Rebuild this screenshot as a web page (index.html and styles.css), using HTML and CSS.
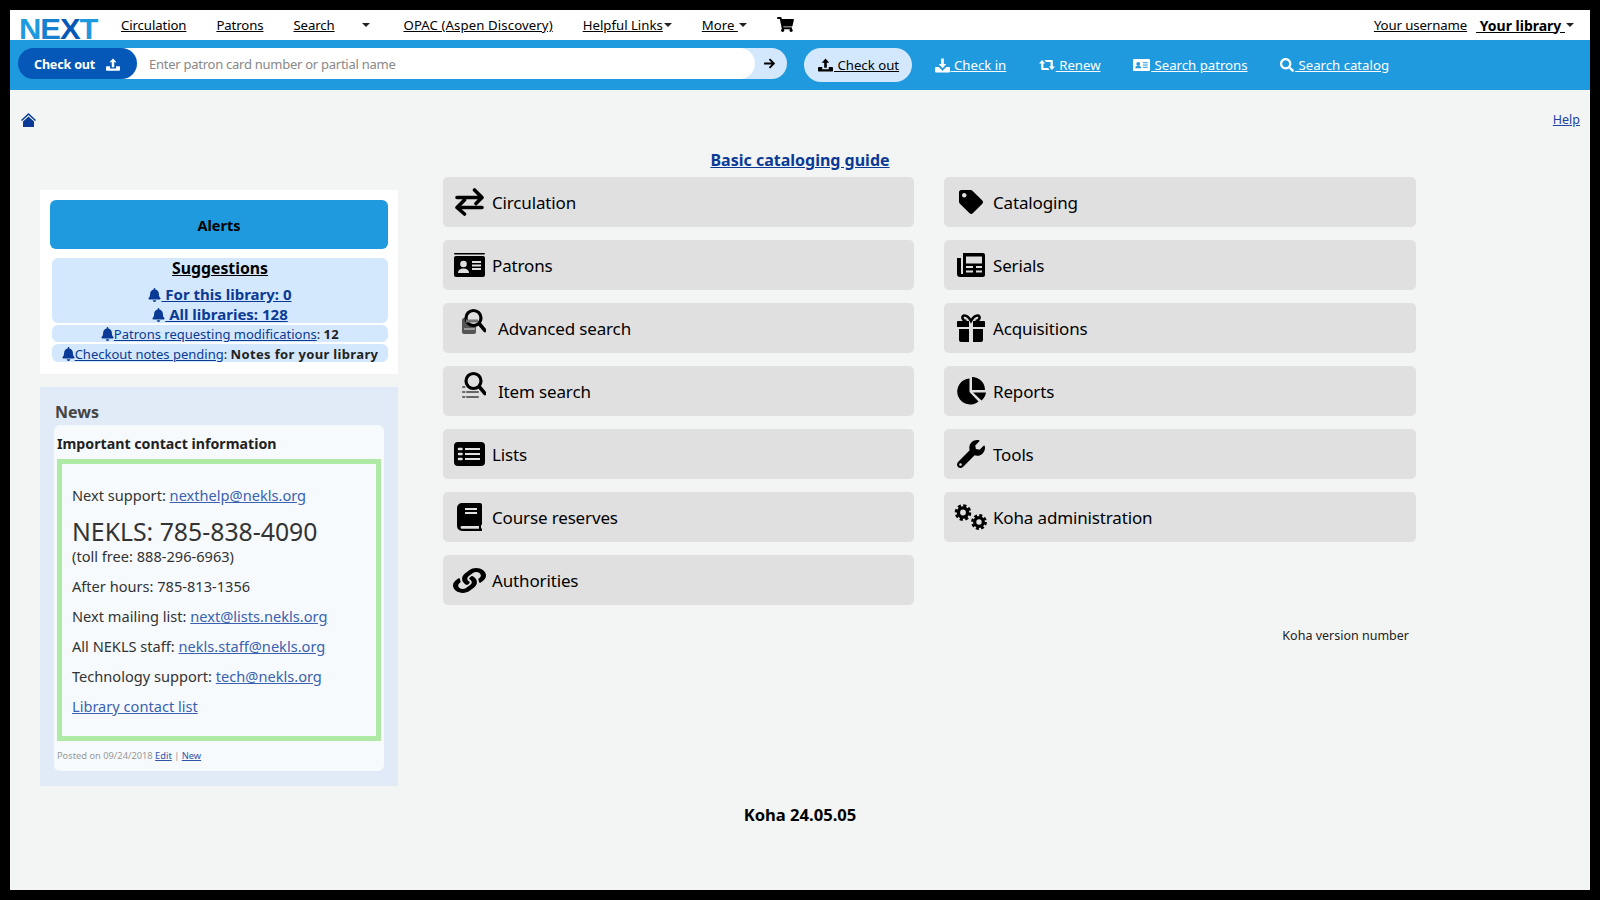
FILE: index.html
```html
<!DOCTYPE html>
<html lang="en">
<head>
    <meta charset="UTF-8">
    <meta name="viewport" content="width=device-width, initial-scale=1.0">
    <title>Koha staff interface</title>
    <link rel="stylesheet" href="styles.css">
</head>
<body>
    <svg class="sprite" xmlns="http://www.w3.org/2000/svg">
        <symbol id="i-cart" viewBox="0 0 576 512"><path d="M528.12 301.319l47.273-208C578.806 78.301 567.391 64 551.99 64H159.208l-9.166-44.81C147.758 8.021 137.93 0 126.529 0H24C10.745 0 0 10.745 0 24v16c0 13.255 10.745 24 24 24h69.883l70.248 343.435C147.325 417.1 136 435.222 136 456c0 30.928 25.072 56 56 56s56-25.072 56-56c0-15.674-6.447-29.835-16.824-40h209.647C430.447 426.165 424 440.326 424 456c0 30.928 25.072 56 56 56s56-25.072 56-56c0-22.172-12.888-41.332-31.579-50.405l5.517-24.276c3.413-15.018-8.002-29.319-23.403-29.319H218.117l-6.545-32h293.145c11.206 0 20.92-7.754 23.403-18.681z"/></symbol>
        <symbol id="i-bell" viewBox="0 0 448 512"><path d="M224 512c35.32 0 63.97-28.65 63.97-64H160.03c0 35.35 28.65 64 63.97 64zm215.39-149.71c-19.32-20.76-55.47-51.99-55.47-154.29 0-77.7-54.48-139.9-127.94-155.16V32c0-17.67-14.32-32-31.98-32s-31.98 14.33-31.98 32v20.84C118.56 68.1 64.08 130.3 64.08 208c0 102.3-36.15 133.53-55.47 154.29-6 6.45-8.66 14.16-8.61 21.71.11 16.4 12.98 32 32.1 32h383.8c19.12 0 32-15.6 32.1-32 .05-7.55-2.61-15.27-8.61-21.71z"/></symbol>
        <symbol id="i-search" viewBox="0 0 512 512"><path d="M505 442.7L405.3 343c-4.5-4.5-10.6-7-17-7H372c27.6-35.3 44-79.7 44-128C416 93.1 322.9 0 208 0S0 93.1 0 208s93.1 208 208 208c48.3 0 92.7-16.4 128-44v16.3c0 6.4 2.5 12.5 7 17l99.7 99.7c9.4 9.4 24.6 9.4 33.9 0l28.3-28.3c9.4-9.4 9.4-24.6.1-34zM208 336c-70.7 0-128-57.2-128-128 0-70.7 57.2-128 128-128 70.7 0 128 57.2 128 128 0 70.7-57.2 128-128 128z"/></symbol>
        <symbol id="i-wrench" viewBox="0 0 512 512"><path d="M507.73 109.1c-2.24-9.03-13.54-12.09-20.12-5.51l-74.36 74.36-67.88-11.31-11.31-67.88 74.36-74.36c6.62-6.62 3.43-17.9-5.66-20.16-47.38-11.74-99.55.91-136.58 37.93-39.64 39.64-50.55 97.1-34.05 147.2L18.74 402.76c-24.99 24.99-24.99 65.51 0 90.5 24.99 24.99 65.51 24.99 90.5 0l213.21-213.21c50.12 16.71 107.47 5.68 147.37-34.22 37.07-37.07 49.7-89.32 37.91-136.73zM64 472c-13.25 0-24-10.75-24-24 0-13.26 10.75-24 24-24s24 10.74 24 24c0 13.25-10.75 24-24 24z"/></symbol>
        <symbol id="i-tag" viewBox="0 0 512 512"><path d="M0 252.118V48C0 21.49 21.49 0 48 0h204.118a48 48 0 0 1 33.941 14.059l211.882 211.882c18.745 18.745 18.745 49.137 0 67.882L293.823 497.941c-18.745 18.745-49.137 18.745-67.882 0L14.059 286.059A48 48 0 0 1 0 252.118zM112 64c-26.51 0-48 21.49-48 48s21.49 48 48 48 48-21.49 48-48-21.49-48-48-48z"/></symbol>
        <symbol id="i-home" viewBox="0 0 15 14"><path d="M7.5 0L15 7l-1 1-6.5-6L1 8 0 7z"/><path d="M7.5 3.5L13 8.5V14H2V8.5z"/></symbol>
        <symbol id="i-upload" viewBox="0 0 16 14"><path d="M8 0l4 4.5H9.4V10H6.6V4.5H4z"/><path d="M1 9h3.5v2.5h7V9H15a1 1 0 0 1 1 1v3a1 1 0 0 1-1 1H1a1 1 0 0 1-1-1v-3a1 1 0 0 1 1-1z"/></symbol>
        <symbol id="i-download" viewBox="0 0 16 15"><path d="M6.6 0h2.8v6H12l-4 4.5L4 6h2.6z"/><path d="M1 9h3l4 4 4-4h3a1 1 0 0 1 1 1v4a1 1 0 0 1-1 1H1a1 1 0 0 1-1-1v-4a1 1 0 0 1 1-1z"/></symbol>
        <symbol id="i-renew" viewBox="0 0 16 12"><path d="M3 1L6.2 4.6H4.4V9H9l1.7 2H3.2a1 1 0 0 1-1-1V4.6H0z"/><path d="M13 11L9.8 7.4h1.8V3H7L5.3 1h7.5a1 1 0 0 1 1 1v5.400H16z"/></symbol>
        <symbol id="i-card" viewBox="0 0 31 24"><rect width="31" height="1.600" rx=".8"/><rect y="3" width="31" height="21" rx="2"/><circle cx="9.500" cy="11" r="3.300" fill="#e0e0e0"/><path d="M4 20c0-3 2-4.500 5.500-4.500S15 17 15 20z" fill="#e0e0e0"/><path d="M18 9h9M18 12.500h9M18 16h9" stroke="#e0e0e0" stroke-width="1.800"/></symbol>
        <symbol id="i-card-white" viewBox="0 0 31 24"><rect width="31" height="22" y="1" rx="2"/><circle cx="9.500" cy="10" r="3.500" fill="#209ade"/><path d="M4 18c0-3 2-4.500 5.500-4.500S15 15 15 18z" fill="#209ade"/><path d="M18 8h9M18 12h9M18 16h9" stroke="#209ade" stroke-width="2"/></symbol>
        <symbol id="i-exchange" viewBox="0 0 29 27"><path d="M2 9h25M19.500 1.500L27 9l-6 6M27 19H2M9.500 11.500L2 19l7.500 6.500" fill="none" stroke="#000" stroke-width="3.600" stroke-linecap="round" stroke-linejoin="round"/></symbol>
        <symbol id="i-adv" viewBox="0 0 24 26"><rect y="9" width="14" height="16" rx="2" fill="#555"/><circle cx="11.500" cy="9" r="7.500" fill="#e0e0e0" stroke="#000" stroke-width="3.200"/><path d="M4 12h12" stroke="#777" stroke-width="3"/><path d="M2 20h11" stroke="#9a9a9a" stroke-width="2"/><path d="M17.500 15l5.500 6.500" stroke="#000" stroke-width="3.600" stroke-linecap="round"/></symbol>
        <symbol id="i-item" viewBox="0 0 24 26"><path d="M1 15h1.500M1 20h1.500M1 25h1.500M5 20h11M5 25h11" stroke="#666" stroke-width="2" stroke-linecap="round"/><circle cx="11.500" cy="9" r="7.500" fill="#e0e0e0" stroke="#000" stroke-width="3.200"/><path d="M17.500 15l5.500 6.500" stroke="#000" stroke-width="3.600" stroke-linecap="round"/></symbol>
        <symbol id="i-list" viewBox="0 0 31 24"><rect width="31" height="24" rx="4"/><path d="M5 7h2.500M5 12h2.500M5 17h2.500" stroke="#e0e0e0" stroke-width="2.600" stroke-linecap="round"/><path d="M11 7h15M11 12h15M11 17h15" stroke="#e0e0e0" stroke-width="2"/></symbol>
        <symbol id="i-book" viewBox="0 0 25 28"><path d="M5 0h18a2 2 0 0 1 2 2v19a1.500 1.500 0 0 1-1 1.400v3.200h1V28H5a5 5 0 0 1-5-5V5a5 5 0 0 1 5-5z"/><path d="M8 6h12M8 10h12" stroke="#e0e0e0" stroke-width="1.800"/><path d="M5 23h17v2.800H5a1.400 1.400 0 0 1 0-2.800z" fill="#e0e0e0"/></symbol>
        <symbol id="i-serials" viewBox="0 0 28 24"><path d="M6 0h20a2 2 0 0 1 2 2v20a2 2 0 0 1-2 2H3a3 3 0 0 1-3-3V5h4v16h2z"/><rect x="9" y="3.500" width="16" height="7" fill="#e0e0e0"/><path d="M9 14h7M19 14h6M9 18.500h7M19 18.500h6" stroke="#e0e0e0" stroke-width="2"/></symbol>
        <symbol id="i-gift" viewBox="0 0 28 28"><path d="M9.500 7C5 7 4 1.500 7.500 1.500 11 1.500 14 7 14 7s3-5.500 6.500-5.500C24 1.500 23 7 18.500 7" fill="none" stroke="#000" stroke-width="2.600"/><path d="M1 7h11v6H0V8a1 1 0 0 1 1-1zM16 7h11a1 1 0 0 1 1 1v5H16zM2 15h10v13H4a2 2 0 0 1-2-2zM16 15h10v11a2 2 0 0 1-2 2h-8z"/></symbol>
        <symbol id="i-pie" viewBox="0 0 30 28"><path d="M13.500 1.500V15l9 9.500A13 13 0 1 1 13.500 1.500z"/><path d="M16 0a13 13 0 0 1 13 13H16z"/><path d="M17 15.500h13a13 13 0 0 1-4.500 8z"/></symbol>
        <symbol id="i-link" viewBox="0 0 512 512" preserveAspectRatio="none"><path d="M326.612 185.391c59.747 59.809 58.927 155.698.36 214.59-.11.12-.24.25-.36.37l-67.2 67.2c-59.27 59.27-155.699 59.262-214.96 0-59.27-59.26-59.27-155.7 0-214.96l37.106-37.106c9.84-9.84 26.786-3.3 27.294 10.606.648 17.722 3.826 35.527 9.69 52.721 1.986 5.822.567 12.262-3.783 16.612l-13.087 13.087c-28.026 28.026-28.905 73.66-1.155 101.96 28.024 28.579 74.086 28.749 102.325.51l67.2-67.19c28.191-28.191 28.073-73.757 0-101.83-3.701-3.694-7.429-6.564-10.341-8.569a16.037 16.037 0 0 1-6.947-12.606c-.396-10.567 3.348-21.456 11.698-29.806l21.054-21.055c5.521-5.521 14.182-6.199 20.584-1.731a152.482 152.482 0 0 1 20.522 17.197zM467.547 44.449c-59.261-59.262-155.69-59.27-214.96 0l-67.2 67.2c-.12.12-.25.25-.36.37-58.566 58.892-59.387 154.781.36 214.59a152.454 152.454 0 0 0 20.521 17.196c6.402 4.468 15.064 3.789 20.584-1.731l21.054-21.055c8.35-8.35 12.094-19.239 11.698-29.806a16.037 16.037 0 0 0-6.947-12.606c-2.912-2.005-6.64-4.875-10.341-8.569-28.073-28.073-28.191-73.639 0-101.83l67.2-67.19c28.239-28.239 74.3-28.069 102.325.51 27.75 28.3 26.872 73.934-1.155 101.96l-13.087 13.087c-4.35 4.35-5.769 10.79-3.783 16.612 5.864 17.194 9.042 34.999 9.69 52.721.509 13.906 17.454 20.446 27.294 10.606l37.106-37.106c59.271-59.259 59.271-155.699.001-214.959z"/></symbol>
        <symbol id="i-cogs" viewBox="0 0 34 27"><g fill="none" stroke="#000"><circle cx="9" cy="9" r="4.600" stroke-width="3.400"/><circle cx="9" cy="9" r="7" stroke-width="2.600" stroke-dasharray="3.200 2.300"/><circle cx="25" cy="18.500" r="4.300" stroke-width="3.200"/><circle cx="25" cy="18.500" r="6.600" stroke-width="2.600" stroke-dasharray="3 2.200"/></g></symbol>
    </svg>

    <div class="app">
        <nav class="topbar">
            <a class="logo" href="#"><span class="lt">N</span><span class="md">E</span><span class="dk">X</span><span class="lt">T</span></a>
            <a class="tight" href="#">Circulation</a>
            <a class="tight" href="#">Patrons</a>
            <span class="menu menu-search"><a class="tight" href="#">Search</a><i class="caret"></i></span>
            <a class="wide" href="#">OPAC (Aspen Discovery)</a>
            <span class="menu"><a href="#">Helpful Links</a><i class="caret"></i></span>
            <span class="menu"><a href="#">More&nbsp;</a><i class="caret"></i></span>
            <a class="cart" href="#"><svg><use href="#i-cart"/></svg></a>
            <span class="topbar-right">
                <a class="username" href="#">Your username</a>
                <span class="menu"><a class="library" href="#">&nbsp;Your library&nbsp;</a><i class="caret"></i></span>
            </span>
        </nav>

        <div class="searchbar">
            <form class="checkout-form">
                <span class="checkout-label">Check out <svg><use href="#i-upload"/></svg></span>
                <input class="checkout-input" type="text" placeholder="Enter patron card number or partial name">
                <button class="checkout-go" type="button"><svg viewBox="0 0 12 12"><path d="M1 6h9M6 2l4 4-4 4" fill="none" stroke="#000" stroke-width="1.700"/></svg></button>
            </form>
            <ul class="tabs">
                <li class="tab active"><svg class="t-up"><use href="#i-upload"/></svg><a href="#"> Check out</a></li>
                <li class="tab"><svg class="t-down"><use href="#i-download"/></svg><a href="#"> Check in</a></li>
                <li class="tab"><svg class="t-renew"><use href="#i-renew"/></svg><a href="#"> Renew</a></li>
                <li class="tab"><svg class="t-card"><use href="#i-card-white"/></svg><a href="#"> Search patrons</a></li>
                <li class="tab"><svg class="t-search"><use href="#i-search"/></svg><a href="#"> Search catalog</a></li>
            </ul>
        </div>

        <main class="main">
            <div class="crumbs">
                <a class="home" href="#"><svg><use href="#i-home"/></svg></a>
                <a class="help" href="#">Help</a>
            </div>
            <h3 class="guide"><a href="#">Basic cataloging guide</a></h3>

            <div class="columns">
                <aside class="sidebar">
                    <section class="alerts">
                        <div class="alerts-head">Alerts</div>
                        <div class="alert alert-big">
                            <a class="sugg" href="#">Suggestions</a>
                            <a class="sugg-link" href="#"><svg class="bell"><use href="#i-bell"/></svg> For this library: 0</a>
                            <a class="sugg-link" href="#"><svg class="bell"><use href="#i-bell"/></svg> All libraries: 128</a>
                        </div>
                        <div class="alert alert-mods"><svg class="bell"><use href="#i-bell"/></svg><a href="#">Patrons requesting modifications</a>: <b>12</b></div>
                        <div class="alert alert-notes"><svg class="bell"><use href="#i-bell"/></svg><a href="#">Checkout notes pending</a>: <b>Notes for your library</b></div>
                    </section>
                    <section class="news">
                        <h3>News</h3>
                        <div class="news-card">
                            <h4>Important contact information</h4>
                            <div class="news-body">
                                <p>Next support: <a href="#">nexthelp@nekls.org</a></p>
                                <p class="phone"><span>NEKLS: 785-838-4090</span><br>(toll free: 888-296-6963)</p>
                                <p>After hours: 785-813-1356</p>
                                <p>Next mailing list: <a href="#">next@lists.nekls.org</a></p>
                                <p>All NEKLS staff: <a href="#">nekls.staff@nekls.org</a></p>
                                <p>Technology support: <a href="#">tech@nekls.org</a></p>
                                <p><a href="#">Library contact list</a></p>
                            </div>
                            <div class="news-foot">Posted on 09/24/2018 <a href="#">Edit</a> | <a href="#">New</a></div>
                        </div>
                    </section>
                </aside>

                <div class="modules">
                    <div class="module-grid">
                        <a class="module" href="#"><span class="slot"><svg class="w29"><use href="#i-exchange"/></svg></span>Circulation</a>
                        <a class="module" href="#"><span class="slot"><svg class="w24"><use href="#i-tag"/></svg></span>Cataloging</a>
                        <a class="module" href="#"><span class="slot"><svg class="w31"><use href="#i-card"/></svg></span>Patrons</a>
                        <a class="module" href="#"><span class="slot"><svg class="w28"><use href="#i-serials"/></svg></span>Serials</a>
                        <a class="module shifted" href="#"><span class="slot"><svg class="w24"><use href="#i-adv"/></svg></span>Advanced search</a>
                        <a class="module" href="#"><span class="slot"><svg class="w28"><use href="#i-gift"/></svg></span>Acquisitions</a>
                        <a class="module shifted" href="#"><span class="slot"><svg class="w24"><use href="#i-item"/></svg></span>Item search</a>
                        <a class="module" href="#"><span class="slot"><svg class="w30"><use href="#i-pie"/></svg></span>Reports</a>
                        <a class="module" href="#"><span class="slot"><svg class="w31"><use href="#i-list"/></svg></span>Lists</a>
                        <a class="module" href="#"><span class="slot"><svg class="w28"><use href="#i-wrench"/></svg></span>Tools</a>
                        <a class="module" href="#"><span class="slot"><svg class="w25"><use href="#i-book"/></svg></span>Course reserves</a>
                        <a class="module" href="#"><span class="slot"><svg class="w34"><use href="#i-cogs"/></svg></span>Koha administration</a>
                        <a class="module" href="#"><span class="slot"><svg class="w33"><use href="#i-link"/></svg></span>Authorities</a>
                    </div>
                    <div class="version-note">Koha version number</div>
                </div>
            </div>

            <div class="koha-version">Koha 24.05.05</div>
        </main>
    </div>
</body>
</html>
```

FILE: styles.css
```css
* {
    box-sizing: border-box;
}
html, body {
    height: 100%;
}
body {
    margin: 0;
    padding: 10px;
    background: #000;
    font-family: "Noto Sans", "Open Sans", sans-serif;
    font-size: 14px;
    color: #222;
    overflow: hidden;
}
.sprite {
    display: none;
}
svg {
    fill: currentColor;
}
.app {
    height: 880px;
    display: flex;
    flex-direction: column;
    background: #f3f5f4;
}

/* top menu */
.topbar {
    height: 30px;
    flex: none;
    display: flex;
    align-items: center;
    gap: 30px;
    background: #fff;
    padding-left: 9px;
    font-size: 13.2px;
}
.topbar a {
    color: #000;
}
.topbar .tight {
    letter-spacing: -.1px;
}
.topbar .wide {
    letter-spacing: .1px;
}
.logo {
    width: 80px;
    margin-right: -8px;
    font-family: "Liberation Sans", sans-serif;
    font-weight: 700;
    font-size: 30px;
    line-height: 22px;
    height: 30px;
    padding-top: 8px;
    text-decoration: none;
    letter-spacing: -1px;
    white-space: nowrap;
    transform: scaleX(1.03);
    transform-origin: left;
}
.topbar a.logo span.lt { color: #209ade; }
.topbar a.logo span.md { color: #1680d0; }
.topbar a.logo span.dk { color: #0557b8; }
.menu {
    display: inline-flex;
    align-items: center;
}
.menu-search {
    width: 80px;
    justify-content: space-between;
    padding-right: 3px;
}
.caret {
    display: inline-block;
    margin-left: 1px;
    border: 4px solid transparent;
    border-top-color: #222;
    border-bottom: 0;
}
.cart svg {
    width: 17px;
    height: 15px;
    display: block;
    color: #000;
    margin-top: -2px;
}
.topbar-right {
    margin-left: auto;
    display: flex;
    align-items: center;
    gap: 9px;
    padding-right: 16px;
}
.username {
    letter-spacing: -.1px;
}
.library {
    font-weight: 700;
    font-size: 14px;
}

/* search bar */
.searchbar {
    height: 50px;
    flex: none;
    display: flex;
    background: #209ade;
    padding: 8px 0 0 8px;
    font-size: 13.2px;
}
.checkout-form {
    display: flex;
    width: 769px;
    height: 31px;
}
.checkout-label {
    width: 119px;
    flex: none;
    display: flex;
    align-items: center;
    gap: 11px;
    padding: 1px 0 0 16px;
    background: #0557b8;
    color: #fff;
    font-weight: 700;
    font-size: 12.6px;
    letter-spacing: -.2px;
    border-radius: 16px;
    position: relative;
    z-index: 1;
}
.checkout-label svg {
    width: 14px;
    height: 13px;
}
.checkout-input {
    flex: 1;
    margin-left: -16px;
    padding: 0 12px 0 28px;
    border: 0;
    border-radius: 0 16px 16px 0;
    font: inherit;
    font-size: 13px;
    letter-spacing: -.26px;
    color: #222;
    background: #fff;
    position: relative;
}
.checkout-input::placeholder {
    color: #888;
}
.checkout-go {
    width: 48px;
    flex: none;
    margin-left: -16px;
    padding: 0 0 0 24px;
    border: 0;
    background: #d4e8fd;
    border-radius: 0 16px 16px 0;
}
.checkout-go svg {
    width: 13px;
    height: 13px;
    display: block;
}
.tabs {
    list-style: none;
    margin: 0 0 0 17px;
    padding: 0;
    display: flex;
    gap: 15.5px;
    height: 34px;
}
.tab {
    display: flex;
    align-items: center;
    gap: 1px;
    height: 34px;
    padding: 0 6px 0 11px;
    color: #fff;
    white-space: pre;
}
.tab a {
    color: #fff;
}
.tab.active {
    background: #d4e8fd;
    border-radius: 17px;
    color: #000;
    padding: 0 13px 0 14px;
    margin-right: -4px;
}
.tab.active a {
    color: #000;
}
.t-up { width: 15px; height: 14px; }
.t-down { width: 15px; height: 15px; }
.t-renew { width: 16px; height: 12px; }
.t-card { width: 17px; height: 14px; }
.t-search { width: 14px; height: 14px; }

/* main area */
.main {
    flex: 1;
    display: flex;
    flex-direction: column;
}
.crumbs {
    display: flex;
    justify-content: space-between;
    align-items: center;
    padding: 13px 10px 0 11px;
    height: 46px;
}
.home {
    color: #0a3a96;
    display: block;
    height: 14px;
}
.home svg {
    display: block;
    width: 15px;
    height: 14px;
}
.help {
    font-size: 12.500px;
    color: #2142a0;
}
.guide {
    margin: 11px 0 0;
    height: 30px;
    text-align: center;
    font-size: 16px;
    line-height: 26px;
}
.guide a {
    color: #0a3a96;
}
.columns {
    display: flex;
    align-items: flex-start;
}
.sidebar {
    width: 358px;
    flex: none;
    margin: 13px 0 0 30px;
}

/* alerts */
.alerts {
    height: 184px;
    padding: 10px;
    background: #fff;
    color: #222;
    font-size: 13px;
}
.alerts-head {
    height: 49px;
    margin-bottom: 9px;
    display: flex;
    align-items: center;
    justify-content: center;
    background: #209ade;
    border-radius: 6px;
    color: #000;
    font-weight: 700;
    font-size: 14.500px;
}
.alert {
    margin: 0 0 2px 2px;
    text-align: center;
    background: #d4e8fd;
    border-radius: 6px;
    white-space: nowrap;
}
.alert a {
    color: #0a3a96;
}
.alert-mods {
    height: 17px;
    line-height: 19px;
}
.alert-notes {
    height: 18px;
    line-height: 21px;
}
.alert b {
    letter-spacing: .35px;
}
.alert-big {
    height: 65px;
    line-height: 20px;
    font-weight: 700;
}
.sugg {
    display: block;
    font-size: 15.8px;
    line-height: 20px;
    margin-bottom: 6px;
}
.alert a.sugg {
    color: #000;
}
.sugg-link {
    display: block;
    font-size: 15px;
    line-height: 20px;
}
.bell {
    width: 13px;
    height: 14px;
    color: #0a3a96;
    vertical-align: -2px;
}

/* news */
.news {
    margin-top: 13px;
    height: 399px;
    padding: 14px 14px 15px;
    background: #e0ebf7;
}
.news h3 {
    margin: 0 0 3px 1px;
    height: 21px;
    font-size: 16px;
    line-height: 23px;
    color: #444;
}
.news-card {
    height: 346px;
    padding: 9px 3px 0;
    background: #f6fafd;
    border-radius: 6px;
}
.news-card h4 {
    margin: 0 0 6px;
    height: 19px;
    font-size: 14.2px;
    line-height: 19px;
    color: #222;
}
.news-body {
    height: 282px;
    padding: 21px 10px 0;
    border: 5px solid #aeeaa6;
    font-size: 14.6px;
    line-height: 20px;
    color: #333;
}
.news-body p {
    margin: 0 0 10px;
}
.news-body p:first-child {
    margin-bottom: 11px;
}
.news-body a {
    color: #3a62b0;
}
.phone span {
    font-size: 24.8px;
    line-height: 30px;
}
.news-foot {
    margin-top: 8px;
    font-size: 9.300px;
    color: #999;
}
.news-foot a {
    color: #2f55aa;
}

/* module buttons */
.modules {
    width: 973px;
    margin-left: 45px;
}
.module-grid {
    display: grid;
    grid-template-columns: 471px 472px;
    column-gap: 30px;
    row-gap: 13px;
}
.module {
    height: 50px;
    display: flex;
    align-items: center;
    padding-left: 5px;
    background: #e0e0e0;
    border-radius: 5px;
    font-size: 17px;
    letter-spacing: -.15px;
    color: #000;
    text-decoration: none;
}
.slot {
    width: 43px;
    margin-right: 1px;
    flex: none;
    display: flex;
    justify-content: center;
}
.slot svg {
    height: 28px;
    display: block;
    color: #000;
}
.shifted .slot {
    margin: 0 3px 12px 4px;
}
.slot .w33 {
    height: 25px;
}
.w24 { width: 24px; }
.w25 { width: 25px; }
.w28 { width: 28px; }
.w29 { width: 29px; }
.w30 { width: 30px; }
.w31 { width: 31px; }
.w33 { width: 33px; }
.w34 { width: 34px; }
.version-note {
    margin-top: 22px;
    padding-right: 7px;
    text-align: right;
    font-size: 12.500px;
    color: #222;
}
.koha-version {
    margin-top: 17px;
    text-align: center;
    font-weight: 700;
    font-size: 16.6px;
    color: #000;
}
```
